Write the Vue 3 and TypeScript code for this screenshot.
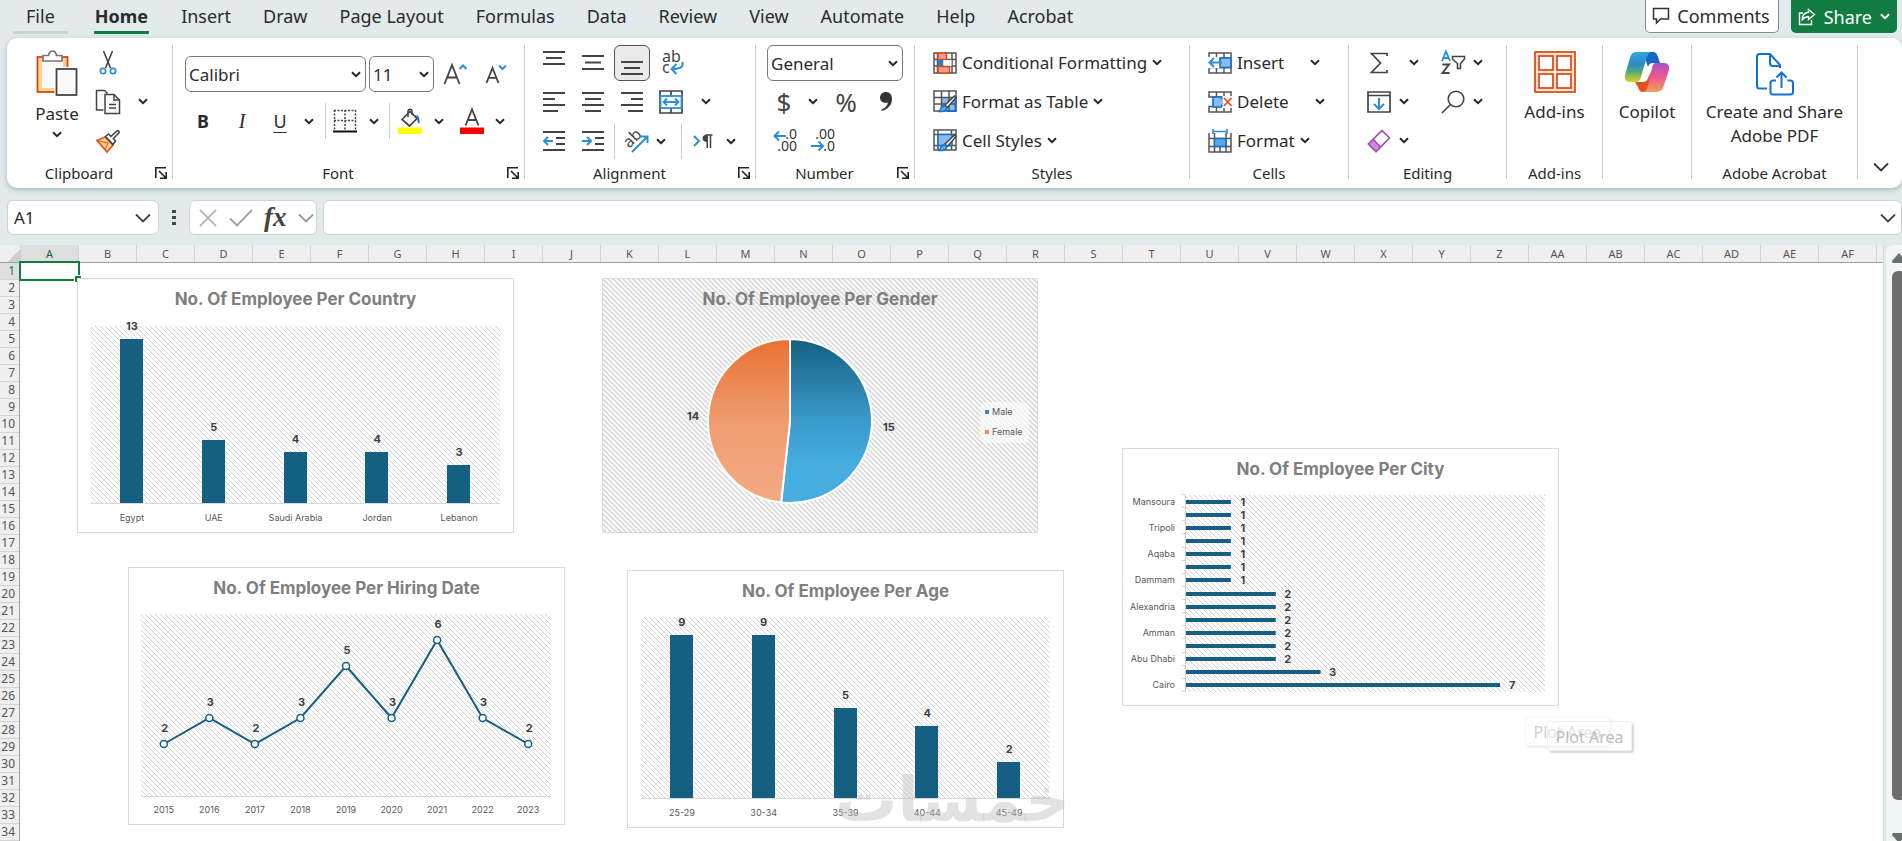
<script setup lang="ts">
import { h, ref } from 'vue'

const Chevron = (props: { tone?: string; big?: boolean }) =>
  h('svg', { width: props.big ? 16 : 10, height: props.big ? 10 : 7, viewBox: props.big ? '0 0 16 10' : '0 0 10 7', fill: 'none', 'aria-hidden': 'true' }, [
    h('path', {
      d: props.big ? 'M1 1.5l7 7 7-7' : 'M1 1.2l4 4 4-4',
      stroke: props.tone ?? '#262626',
      'stroke-width': props.big ? 1.8 : 2,
    }),
  ])
Chevron.props = { tone: String, big: Boolean }

const Launcher = () =>
  h('svg', { width: 12, height: 12, viewBox: '0 0 12 12', fill: 'none', stroke: '#222', 'stroke-width': 1.6 }, [
    h('path', { d: 'M.8 11V.8H11' }),
    h('path', { d: 'M4 4l7 7M11.2 5v6.2H5' }),
  ])

const tabs = ['File', 'Home', 'Insert', 'Draw', 'Page Layout', 'Formulas', 'Data', 'Review', 'View', 'Automate', 'Help', 'Acrobat']
const activeTab = ref('Home')
const cellName = ref('A1')
const formula = ref('')

const columns = Array.from({ length: 32 }, (_, i) =>
  i < 26 ? String.fromCharCode(65 + i) : 'A' + String.fromCharCode(65 + i - 26))
const rows = Array.from({ length: 34 }, (_, i) => i + 1)

interface Point { label: string; value: number }
interface Plot { x: number; y: number; w: number; h: number; max: number }

const countryPlot: Plot = { x: 14, y: 48, w: 409, h: 177, max: 14 }
const countries: Point[] = [
  { label: 'Egypt', value: 13 },
  { label: 'UAE', value: 5 },
  { label: 'Saudi Arabia', value: 4 },
  { label: 'Jordan', value: 4 },
  { label: 'Lebanon', value: 3 },
]
const agePlot: Plot = { x: 14, y: 47, w: 409, h: 181, max: 10 }
const ages: Point[] = [
  { label: '25-29', value: 9 },
  { label: '30-34', value: 9 },
  { label: '35-39', value: 5 },
  { label: '40-44', value: 4 },
  { label: '45-49', value: 2 },
]
const columnCharts = [
  { id: 'country', title: 'No. Of Employee Per Country', plot: countryPlot, data: countries, height: 211 },
  { id: 'age', title: 'No. Of Employee Per Age', plot: agePlot, data: ages, height: 214 },
]
const colX = (p: Plot, n: number, i: number) => p.x + (p.w / n) * (i + 0.5)
const valY = (p: Plot, v: number) => p.y + p.h - (p.h / p.max) * v

const hiringPlot: Plot = { x: 13, y: 47, w: 410, h: 182, max: 7 }
const hiring: Point[] = [2, 3, 2, 3, 5, 3, 6, 3, 2].map((value, i) => ({ label: String(2015 + i), value }))
const hiringLine = hiring.map((d, i) => `${colX(hiringPlot, 9, i)},${valY(hiringPlot, d.value)}`).join(' ')

const cityPlot: Plot = { x: 64, y: 47, w: 359, h: 197, max: 8 }
const cities: Point[] = [
  { label: 'Mansoura', value: 1 }, { label: '', value: 1 },
  { label: 'Tripoli', value: 1 }, { label: '', value: 1 },
  { label: 'Aqaba', value: 1 }, { label: '', value: 1 },
  { label: 'Dammam', value: 1 }, { label: '', value: 2 },
  { label: 'Alexandria', value: 2 }, { label: '', value: 2 },
  { label: 'Amman', value: 2 }, { label: '', value: 2 },
  { label: 'Abu Dhabi', value: 2 }, { label: '', value: 3 },
  { label: 'Cairo', value: 7 },
]
const cityY = (i: number) => cityPlot.y + (cityPlot.h / 15) * (i + 0.5)
const cityW = (v: number) => (cityPlot.w / cityPlot.max) * v

const pie = { cx: 188, cy: 143, r: 82 }
const splitAngle = (15 / 29) * Math.PI * 2
const splitX = pie.cx + pie.r * Math.sin(splitAngle)
const splitY = pie.cy - pie.r * Math.cos(splitAngle)
const malePath = `M${pie.cx} ${pie.cy}V${pie.cy - pie.r}A${pie.r} ${pie.r} 0 1 1 ${splitX} ${splitY}Z`
const femalePath = `M${pie.cx} ${pie.cy}L${splitX} ${splitY}A${pie.r} ${pie.r} 0 0 1 ${pie.cx} ${pie.cy - pie.r}Z`
</script>

<template>
  <div class="excel">
    <header class="topbar">
      <nav class="tabs" aria-label="Ribbon tabs">
        <button v-for="t in tabs" :key="t" class="tab" :class="{ active: t === activeTab, file: t === 'File' }" @click="activeTab = t">{{ t }}</button>
      </nav>
      <div class="actions">
        <button class="comments">
          <svg width="18" height="18" viewBox="0 0 18 18" fill="none" stroke="#333" stroke-width="1.5"><path d="M1.5 1.5h15v10.5H8.5L4.5 16v-4h-3z" /></svg>
          Comments
        </button>
        <button class="share">
          <svg width="18" height="18" viewBox="0 0 18 18" fill="none" stroke="#fff" stroke-width="1.4"><path d="M5 5H1.5v11.5h12V12" /><path d="M10.5 1.5l6 5-6 5V8.800C7.500 8.800 5.500 10 4.200 12.500 4.200 8 6.500 4.600 10.500 4.300z" /></svg>
          Share
          <Chevron tone="#fff" />
        </button>
      </div>
    </header>

    <section class="ribbon" aria-label="Home ribbon">
      <div class="group clip">
        <div class="body">
          <button class="paste">
            <svg width="42" height="46" viewBox="0 0 42 46" fill="none">
              <rect x="1.500" y="7" width="30" height="35" fill="#f8d597" stroke="#d9480f" stroke-width="1.800" />
              <rect x="6" y="11" width="21" height="27" fill="#fafafa" />
              <path d="M7 11V5.500h5.500C13 2.500 14.500 1 16.500 1s3.500 1.500 4 4.500H26V11z" fill="#fff" stroke="#777" stroke-width="1.700" />
              <rect x="18.500" y="17" width="23" height="28" fill="#fff" />
              <rect x="20.500" y="19" width="20" height="26" fill="#fafafa" stroke="#444" stroke-width="1.800" />
            </svg>
            <span>Paste</span>
            <Chevron />
          </button>
          <div class="rows">
            <div class="row">
              <button aria-label="Cut"><svg width="18" height="26" viewBox="0 0 18 26" fill="none"><path d="M4.500 1l7 17M13.500 1l-7 17" stroke="#444" stroke-width="1.600" /><circle cx="4" cy="21" r="2.700" stroke="#2b8fd3" stroke-width="1.700" /><circle cx="14" cy="21" r="2.700" stroke="#2b8fd3" stroke-width="1.700" /></svg></button>
            </div>
            <div class="row">
              <button aria-label="Copy"><svg width="26" height="26" viewBox="0 0 26 26" fill="#fafafa" stroke="#444" stroke-width="1.500"><path d="M8.500 21H1.500V1.500h8l3 3" /><path d="M10 5.500h9l5.500 5.500v13.500H10z" /><path d="M19 5.500V11h5.500M14 15.500h7M14 19h7" fill="none" /></svg></button>
              <button aria-label="Copy options"><Chevron /></button>
            </div>
            <div class="row">
              <button aria-label="Format Painter"><svg width="26" height="24" viewBox="0 0 26 24" fill="none"><path d="M2 11.500l8-3.500 8 8-6 7z" fill="#f8d08e" stroke="#e2521b" stroke-width="1.700" /><path d="M4 12l9 2-3 7" stroke="#e2521b" /><path d="M10.500 7.500l3-2.500 2.500 2.500L22 1.800c1-.8 2.700.8 2 2L18.500 9.500l2 2.500-2.500 3.500z" fill="#fff" stroke="#444" stroke-width="1.600" /></svg></button>
            </div>
          </div>
        </div>
        <footer><span>Clipboard</span><button aria-label="Clipboard settings"><Launcher /></button></footer>
      </div>

      <div class="group font">
        <div class="body">
          <div class="row f1">
            <label class="combo"><select aria-label="Font"><option>Calibri</option></select><Chevron /></label>
            <label class="combo"><select aria-label="Font size"><option>11</option></select><Chevron /></label>
            <button aria-label="Increase font size"><svg width="24" height="22" viewBox="0 0 24 22" fill="none"><path d="M1.500 21L9 2l7.500 19M4 14.500h10" stroke="#444" stroke-width="1.800" /><path d="M16.500 6l3.500-3.500L23.500 6" stroke="#2b8fd3" stroke-width="2" /></svg></button>
            <button aria-label="Decrease font size"><svg width="22" height="20" viewBox="0 0 22 20" fill="none"><path d="M1.500 19L7.500 4l6 15M3.500 13.800h8" stroke="#444" stroke-width="1.800" /><path d="M14 1.500L17.500 5 21 1.500" stroke="#2b8fd3" stroke-width="2" /></svg></button>
          </div>
          <div class="row f2">
            <button class="bold" aria-label="Bold">B</button>
            <button class="italic" aria-label="Italic">I</button>
            <button class="under" aria-label="Underline">U</button>
            <button aria-label="Underline options"><Chevron /></button>
            <i class="sep"></i>
            <button aria-label="Borders"><svg width="24" height="24" viewBox="0 0 24 24" fill="none" stroke="#444" stroke-width="1.500"><path d="M1 1.500h22M1 11.500h22M1.500 1v20M12 1v20M22.500 1v20" stroke-dasharray="2 1.500" /><path d="M0 22.500h24" stroke="#111" stroke-width="2" /></svg></button>
            <button aria-label="Border options"><Chevron /></button>
            <i class="sep"></i>
            <button aria-label="Fill colour"><svg width="24" height="26" viewBox="0 0 24 26" fill="none"><path d="M4 11.500L12 3.500l7 7-7.500 7.500z" stroke="#444" stroke-width="1.700" fill="#fafafa" /><path d="M10 9V3.500c0-3 4-3 4 0V7" stroke="#444" stroke-width="1.500" /><path d="M17 7c4 0 5 3 4.500 9-2-1-2.500-4-2-6z" fill="#1f74c7" /><rect y="19.500" width="24" height="6.500" fill="#ff0" /></svg></button>
            <button aria-label="Fill colour options"><Chevron /></button>
            <button aria-label="Font colour"><svg width="24" height="26" viewBox="0 0 24 26" fill="none"><path d="M5.500 17.500L12 1.500l6.500 16M7.800 12h8.400" stroke="#444" stroke-width="1.800" /><rect y="19.500" width="24" height="6.500" fill="#f00" /></svg></button>
            <button aria-label="Font colour options"><Chevron /></button>
          </div>
        </div>
        <footer><span>Font</span><button aria-label="Font settings"><Launcher /></button></footer>
      </div>

      <div class="group align">
        <div class="body rows">
          <div class="row a1">
            <button aria-label="Top align"><svg class="ln" width="22" height="24" viewBox="0 0 22 24"><path d="M0 1h22M3 7h16M0 13h22" /></svg></button>
            <button aria-label="Middle align"><svg class="ln" width="22" height="24" viewBox="0 0 22 24"><path d="M0 5h22M3 11.500h16M0 18h22" /></svg></button>
            <button class="pressed" aria-label="Bottom align"><svg class="ln" width="22" height="24" viewBox="0 0 22 24"><path d="M0 11h22M3 17h16M0 23h22" /></svg></button>
            <button aria-label="Wrap text"><svg width="24" height="26" viewBox="0 0 24 26" fill="none"><text x="1" y="12" class="ic">ab</text><text x="1" y="23" class="ic">c</text><path d="M21.500 12c1 5-2 7-10 7M15.500 14L10.500 19l5 5" stroke="#2b8fd3" stroke-width="2" /></svg></button>
          </div>
          <div class="row a2">
            <button aria-label="Align left"><svg class="ln" width="22" height="22" viewBox="0 0 22 22"><path d="M0 2h22M0 8h12M0 14h22M0 20h15" /></svg></button>
            <button aria-label="Centre"><svg class="ln" width="22" height="22" viewBox="0 0 22 22"><path d="M0 2h22M3 8h16M0 14h22M3 20h16" /></svg></button>
            <button aria-label="Align right"><svg class="ln" width="22" height="22" viewBox="0 0 22 22"><path d="M0 2h22M10 8h12M0 14h22M7 20h15" /></svg></button>
            <button aria-label="Merge and centre"><svg width="24" height="24" viewBox="0 0 24 24" fill="none"><path d="M1 1h22v22H1zM12 1v5M12 18v5" stroke="#444" stroke-width="1.700" /><rect x="1.500" y="6" width="21" height="12" fill="#fff" stroke="#2b8fd3" stroke-width="1.800" /><path d="M4 12h16M8 8.500L4.500 12 8 15.500M16 8.500l3.500 3.500-3.500 3.500" stroke="#2b8fd3" stroke-width="1.800" /></svg></button>
            <button aria-label="Merge options"><Chevron /></button>
          </div>
          <div class="row a3">
            <button aria-label="Decrease indent"><svg class="ln" width="22" height="22" viewBox="0 0 22 22"><path d="M0 2h22M13 8h9M13 14h9M0 20h22" /><path class="blue" d="M1 11h9M5 7l-4 4 4 4" /></svg></button>
            <button aria-label="Increase indent"><svg class="ln" width="22" height="22" viewBox="0 0 22 22"><path d="M0 2h22M13 8h9M13 14h9M0 20h22" /><path class="blue" d="M0 11h9M5 7l4 4-4 4" /></svg></button>
            <i class="sep"></i>
            <button aria-label="Orientation"><svg width="26" height="26" viewBox="0 0 26 26" fill="none"><text text-anchor="middle" class="ic" transform="translate(13 14) rotate(-45)">ab</text><path d="M9 24L24 9M17.500 8.500H24.500V15" stroke="#2b8fd3" stroke-width="2" /></svg></button>
            <button aria-label="Orientation options"><Chevron /></button>
            <i class="sep"></i>
            <button aria-label="Text direction"><svg width="20" height="16" viewBox="0 0 20 16" fill="none"><path d="M1 3l5 5-5 5" stroke="#2b8fd3" stroke-width="2" /><path d="M19.500 2H13M14.200 2v13M17.500 2v13" stroke="#444" stroke-width="1.500" /><path d="M14 1.500v7.500c-6 0-6-7.500 0-7.500z" fill="#444" /></svg></button>
            <button aria-label="Text direction options"><Chevron /></button>
          </div>
        </div>
        <footer><span>Alignment</span><button aria-label="Alignment settings"><Launcher /></button></footer>
      </div>

      <div class="group number">
        <div class="body rows">
          <div class="row"><label class="combo"><select aria-label="Number format"><option>General</option></select><Chevron /></label></div>
          <div class="row n2">
            <button class="sym" aria-label="Currency">$</button>
            <button aria-label="Currency options"><Chevron /></button>
            <button class="sym" aria-label="Percent">%</button>
            <button aria-label="Comma style"><svg width="12" height="19" viewBox="0 0 12 19"><path d="M6 0c4 0 6 3 6 7 0 6-4 10-10.500 12v-1.500C5.500 16 7.500 13.500 7.800 10.500 4 11.800 0 9.500 0 5.800 0 2.500 2.500 0 6 0z" fill="#333" /></svg></button>
          </div>
          <div class="row n3">
            <button aria-label="Increase decimal"><svg width="24" height="24" viewBox="0 0 24 24" fill="none"><text x="24" y="10" class="dec">.0</text><text x="24" y="22" class="dec">.00</text><path d="M1 7h12M6 2.500L1.500 7 6 11.500" stroke="#2b8fd3" stroke-width="2" /></svg></button>
            <button aria-label="Decrease decimal"><svg width="24" height="24" viewBox="0 0 24 24" fill="none"><text x="24" y="10" class="dec">.00</text><text x="24" y="22" class="dec">.0</text><path d="M0 17h12M7.500 12.500L12 17l-4.500 4.500" stroke="#2b8fd3" stroke-width="2" /></svg></button>
          </div>
        </div>
        <footer><span>Number</span><button aria-label="Number settings"><Launcher /></button></footer>
      </div>

      <div class="group styles">
        <div class="body rows">
          <div class="row"><button class="wide"><svg width="24" height="22" viewBox="0 0 24 22" fill="none"><path d="M1 1h22v20H1zM1 7.500h22M1 14h22M4.500 1v20M19 1v20M12 1v20" stroke="#555" stroke-width="1.500" /><rect x="5" y="1" width="8.500" height="6.500" fill="#ff9a94" stroke="#d9480f" stroke-width="1.500" /><rect x="5" y="8" width="5.500" height="6" fill="#2b7fd0" /><rect x="10.500" y="8" width="8" height="6" fill="#fff" /><rect x="5" y="14.500" width="11.500" height="6.500" fill="#ff9a94" stroke="#d9480f" stroke-width="1.500" /></svg>Conditional Formatting<Chevron /></button></div>
          <div class="row"><button class="wide"><svg width="24" height="23" viewBox="0 0 24 23" fill="none"><rect x="8" y="7" width="15" height="14" fill="#86bdee" /><path d="M1 1h22v20H1zM1 7.500h22M1 14h22M8.500 1v20M16 1v20" stroke="#555" stroke-width="1.500" /><path d="M22.500 6v15H14" stroke="#1a6fc4" stroke-width="2" /><path d="M12 15l9.500-9 1.500 1.500-8.500 10z" fill="#fff" stroke="#444" stroke-width="1.500" /><path d="M5 21.500c3 0 2-6 6.500-6 3.500 1.500 3.500 7-6.500 6z" fill="#5aa7e8" stroke="#1a6fc4" stroke-width="1.400" /></svg>Format as Table<Chevron /></button></div>
          <div class="row"><button class="wide"><svg width="24" height="23" viewBox="0 0 24 23" fill="none"><path d="M1 1h22v20H1zM1 5.500h22M5 1v20M1 16.500h22M18.500 1v20" stroke="#555" stroke-width="1.500" /><rect x="5" y="5.500" width="14" height="11" fill="#86bdee" stroke="#1a6fc4" stroke-width="1.500" /><path d="M12 15l9.500-9 1.500 1.500-8.500 10z" fill="#fff" stroke="#444" stroke-width="1.500" /><path d="M5 21.500c3 0 2-6 6.500-6 3.500 1.500 3.500 7-6.500 6z" fill="#5aa7e8" stroke="#1a6fc4" stroke-width="1.400" /></svg>Cell Styles<Chevron /></button></div>
        </div>
        <footer><span>Styles</span></footer>
      </div>

      <div class="group cells">
        <div class="body rows">
          <div class="row">
            <button class="wide"><svg width="24" height="22" viewBox="0 0 24 22" fill="none"><path d="M1 1h22v20H1zM1 6h22M1 15.500h22M8.500 1v20M16 1v20" stroke="#555" stroke-width="1.500" /><rect x="0" y="5" width="12" height="11" fill="#fff" /><rect x="12" y="6" width="11" height="9.500" fill="#86bdee" stroke="#1a6fc4" stroke-width="1.600" /><path d="M1 10.500h13M6 6l-4.500 4.500L6 15" stroke="#2b8fd3" stroke-width="2" /></svg>Insert</button>
            <button class="split" aria-label="Insert options"><Chevron /></button>
          </div>
          <div class="row">
            <button class="wide"><svg width="24" height="22" viewBox="0 0 24 22" fill="none"><path d="M1 1h22v5H1zM1 15.500h22V21H1zM8.500 1v5M16 1v5M8.500 15.500V21M16 15.500V21" stroke="#555" stroke-width="1.500" /><path d="M5 6h8l3 5-3 5H5z" fill="#86bdee" stroke="#1a6fc4" stroke-width="1.600" /><rect x="14.500" y="5" width="10" height="12" fill="#fff" /><path d="M16 7l7.500 8M23.500 7L16 15" stroke="#e2521b" stroke-width="1.800" /></svg>Delete</button>
            <button class="split" aria-label="Delete options"><Chevron /></button>
          </div>
          <div class="row"><button class="wide"><svg width="24" height="24" viewBox="0 0 24 24" fill="none"><path d="M1 4v19h22V4M1 9.500h22M1 17.500h22M6.500 4v19M18 4v19M12 17v6" stroke="#555" stroke-width="1.500" /><rect x="6.500" y="9.500" width="11.500" height="8" fill="#5aa7e8" stroke="#1a6fc4" stroke-width="1.500" /><path d="M5 2.500h14M5 0v5M19 0v5" stroke="#2b8fd3" stroke-width="1.600" /></svg>Format<Chevron /></button></div>
        </div>
        <footer><span>Cells</span></footer>
      </div>

      <div class="group editing">
        <div class="body rows">
          <div class="row e1">
            <button aria-label="AutoSum"><svg width="18" height="22" viewBox="0 0 18 22" fill="none"><path d="M17 4V1.500H1.500L10.500 11l-9 9.500H17V18" stroke="#444" stroke-width="1.700" /></svg></button>
            <button aria-label="AutoSum options"><Chevron /></button>
            <i></i>
            <button aria-label="Sort and filter"><svg width="24" height="25" viewBox="0 0 24 25" fill="none"><path d="M1 11L5 1.500 9 11M2.500 8h5" stroke="#2b8fd3" stroke-width="1.900" /><path d="M1.500 14.500H8L1.500 23H8.500" stroke="#444" stroke-width="1.900" /><path d="M11.500 6.500h12v2.500l-4 4.500v5h-3v-5l-5-4.500z" stroke="#444" stroke-width="1.600" /></svg></button>
            <button aria-label="Sort options"><Chevron /></button>
          </div>
          <div class="row e2">
            <button aria-label="Fill"><svg width="24" height="22" viewBox="0 0 24 22" fill="none"><path d="M1 1h22v20H1zM1 4.500h22" stroke="#444" stroke-width="1.700" /><path d="M12 7v11M7 13l5 5 5-5" stroke="#2b8fd3" stroke-width="2" /></svg></button>
            <button aria-label="Fill options"><Chevron /></button>
            <i></i>
            <button aria-label="Find and select"><svg width="24" height="24" viewBox="0 0 24 24" fill="none" stroke="#444" stroke-width="1.600"><circle cx="15" cy="9" r="7.800" /><path d="M9.500 14.500L1 23" /></svg></button>
            <button aria-label="Find options"><Chevron /></button>
          </div>
          <div class="row e2">
            <button aria-label="Clear"><svg width="24" height="24" viewBox="0 0 24 24" fill="none"><path d="M15 1.500l7.500 7.500L9 22.500 1.500 15z" fill="#fff" stroke="#a84bb8" stroke-width="1.700" /><path d="M6.500 10.500l7 7.500L9 22.500 1.500 15z" fill="#d08be0" stroke="#a84bb8" stroke-width="1.500" /></svg></button>
            <button aria-label="Clear options"><Chevron /></button>
          </div>
        </div>
        <footer><span>Editing</span></footer>
      </div>

      <div class="group addins">
        <button class="tall">
          <svg width="42" height="42" viewBox="0 0 42 42" fill="#fff" stroke="#d9480f" stroke-width="1.700"><rect x="1" y="1" width="40" height="40" fill="#fbe3d6" /><rect x="5" y="5" width="14" height="14" /><rect x="23" y="5" width="14" height="14" /><rect x="5" y="23" width="14" height="14" /><rect x="23" y="23" width="14" height="14" /></svg>
          <span>Add-ins</span>
        </button>
        <footer><span>Add-ins</span></footer>
      </div>

      <div class="group copilot">
        <button class="tall">
          <svg width="44" height="42" viewBox="0 0 44 42">
            <defs>
              <linearGradient id="cpA" x1="0" y1="0" x2="0" y2="1"><stop offset="0" stop-color="#2fa9dc" /><stop offset=".4" stop-color="#2b88c9" /><stop offset=".65" stop-color="#51a878" /><stop offset="1" stop-color="#e2cf1c" /></linearGradient>
              <linearGradient id="cpB" x1="0" y1="0" x2="0" y2="1"><stop offset="0" stop-color="#b04fc4" /><stop offset=".5" stop-color="#ec5a8d" /><stop offset="1" stop-color="#f2a05a" /></linearGradient>
            </defs>
            <path d="M21 1h7c3 0 4 2 5 5l2 6h-7c-3 0-4 1-5 4l-3-9c-1-4 0-6 1-6z" fill="#1467c6" />
            <path d="M12 1h14c-3 1-4 4-5 8l-5 17c-1 4-3 5-6 5H5c-4 0-6-3-5-7L5 7c1-4 3-6 7-6z" fill="url(#cpA)" />
            <path d="M10 31h7c3 0 5-1 6-4l4-8-3 16c-1 4-3 6-6 6-3 0-4-2-5-5z" fill="#e2521b" />
            <path d="M31 12h8c4 0 6 3 5 7l-5 15c-1 5-4 7-8 7H17c4 0 5-3 6-7l4-17c1-4 2-5 4-5z" fill="url(#cpB)" />
          </svg>
          <span>Copilot</span>
        </button>
      </div>

      <div class="group acrobat">
        <button class="tall pdf">
          <svg width="38" height="42" viewBox="0 0 38 42" fill="none" stroke="#1473d0" stroke-width="2"><path d="M11 35.500H3.500c-1.500 0-2.500-1-2.500-2.500V3.500C1 2 2 1 3.500 1H14l10 11v3M14 1v8.500c0 2 1 3.500 3 3.500h7" /><path d="M20 27.500h-3c-1.500 0-2.500 1-2.500 2.500v9c0 1.500 1 2.500 2.500 2.500h17.500c1.500 0 2.500-1 2.500-2.500v-9c0-1.500-1-2.500-2.500-2.500h-3" /><path d="M25.500 35V19.500M20.500 24.500l5-5 5 5" /></svg>
          <span>Create and Share<br />Adobe PDF</span>
        </button>
        <footer><span>Adobe Acrobat</span></footer>
      </div>

      <div class="tail"><button aria-label="Collapse ribbon"><Chevron big tone="#333" /></button></div>
    </section>

    <section class="formula-bar">
      <label class="namebox"><input v-model="cellName" aria-label="Name box" /><Chevron big tone="#444" /></label>
      <svg class="dots" width="4" height="16" viewBox="0 0 4 16" fill="#444"><rect width="4" height="3" /><rect y="6" width="4" height="3" /><rect y="12" width="4" height="3" /></svg>
      <div class="fxbox">
        <button aria-label="Cancel"><svg width="18" height="18" viewBox="0 0 20 20" stroke="#b0b0b0" stroke-width="1.800"><path d="M1 1l18 18M19 1L1 19" /></svg></button>
        <button aria-label="Enter"><svg width="24" height="18" viewBox="0 0 24 18" fill="none" stroke="#a0a0a0" stroke-width="1.800"><path d="M1 9.500l7 7L23 1" /></svg></button>
        <button class="fx" aria-label="Insert function">fx</button>
        <button aria-label="Function options"><Chevron big tone="#999" /></button>
      </div>
      <label class="formula"><input v-model="formula" aria-label="Formula" /><Chevron big tone="#444" /></label>
    </section>

    <main class="workspace">
      <div class="sheet">
        <div class="colhead">
          <div class="corner"></div>
          <div v-for="c in columns" :key="c" class="col" :class="{ sel: c === 'A' }">{{ c }}</div>
        </div>
        <div class="grid">
          <div class="rowhead">
            <div v-for="r in rows" :key="r" class="rnum" :class="{ sel: r === 1 }">{{ r }}</div>
          </div>
          <div class="canvas">
            <div class="cursor"></div>

            <article v-for="c in columnCharts" :key="c.id" class="card" :class="c.id">
              <h2>{{ c.title }}</h2>
              <svg width="435" :height="c.height" :viewBox="`1 43 435 ${c.height}`">
                <defs>
                  <pattern :id="'hatch-' + c.id" width="5" height="5" patternUnits="userSpaceOnUse"><path d="M-1 -1L6 6M-1 4L1 6M4 -1L6 1" stroke="#d4d4d4" stroke-width="1" /></pattern>
                </defs>
                <rect :x="c.plot.x" :y="c.plot.y" :width="c.plot.w" :height="c.plot.h" :fill="`url(#hatch-${c.id})`" />
                <path :d="`M${c.plot.x} ${c.plot.y + c.plot.h + 0.5}h${c.plot.w}`" stroke="#d9d9d9" />
                <g v-for="(d, i) in c.data" :key="d.label">
                  <rect :x="Math.round(colX(c.plot, 5, i) - 12)" :y="Math.round(valY(c.plot, d.value))" width="23" :height="c.plot.y + c.plot.h - Math.round(valY(c.plot, d.value))" fill="#156082" />
                  <text class="val" :x="colX(c.plot, 5, i)" :y="valY(c.plot, d.value) - 9">{{ d.value }}</text>
                  <text class="cat" :x="colX(c.plot, 5, i)" :y="c.plot.y + c.plot.h + 18">{{ d.label }}</text>
                </g>
              </svg>
            </article>

            <article class="card gender">
              <svg class="backdrop" width="100%" height="100%">
                <defs><pattern id="hatch-dark" width="5" height="5" patternUnits="userSpaceOnUse"><path d="M-1 -1L6 6M-1 4L1 6M4 -1L6 1" stroke="#dedede" stroke-width="2" /></pattern></defs>
                <rect width="100%" height="100%" fill="url(#hatch-dark)" />
              </svg>
              <h2>No. Of Employee Per Gender</h2>
              <svg width="434" height="211" viewBox="1 43 434 211">
                <defs>
                  <linearGradient id="male" x1="0" y1="0" x2="0" y2="1"><stop offset="0" stop-color="#156082" /><stop offset=".5" stop-color="#3a9bca" /><stop offset=".75" stop-color="#45addf" /><stop offset="1" stop-color="#45addf" /></linearGradient>
                  <linearGradient id="female" x1="0" y1="0" x2="0" y2="1"><stop offset="0" stop-color="#e97132" /><stop offset=".5" stop-color="#ef9c70" /><stop offset="1" stop-color="#f4ab85" /></linearGradient>
                </defs>
                <path :d="malePath" fill="url(#male)" stroke="#fff" stroke-width="2" />
                <path :d="femalePath" fill="url(#female)" stroke="#fff" stroke-width="2" />
                <text class="val" x="91" y="142">14</text>
                <text class="val" x="287" y="153">15</text>
                <rect x="378" y="124" width="49" height="41" rx="6" fill="#fff" fill-opacity=".6" />
                <rect x="383" y="132" width="4" height="4" fill="#2b8cbd" /><text class="leg" x="390" y="137">Male</text>
                <rect x="383" y="152" width="4" height="4" fill="#ee8d5a" /><text class="leg" x="390" y="157">Female</text>
              </svg>
            </article>

            <article class="card hiring">
              <h2>No. Of Employee Per Hiring Date</h2>
              <svg width="435" height="214" viewBox="1 43 435 214">
                <rect :x="hiringPlot.x" :y="hiringPlot.y" :width="hiringPlot.w" :height="hiringPlot.h" fill="url(#hatch-country)" />
                <path :d="`M${hiringPlot.x} ${hiringPlot.y + hiringPlot.h + 0.5}h${hiringPlot.w}`" stroke="#d9d9d9" />
                <polyline :points="hiringLine" fill="none" stroke="#156082" stroke-width="2" />
                <g v-for="(d, i) in hiring" :key="d.label">
                  <circle :cx="colX(hiringPlot, 9, i)" :cy="valY(hiringPlot, d.value)" r="3.500" fill="#fff" stroke="#156082" stroke-width="1.500" />
                  <text class="val" :x="colX(hiringPlot, 9, i) + 1" :y="valY(hiringPlot, d.value) - 12">{{ d.value }}</text>
                  <text class="cat" :x="colX(hiringPlot, 9, i)" :y="hiringPlot.y + hiringPlot.h + 17">{{ d.label }}</text>
                </g>
              </svg>
            </article>

            <article class="card city">
              <h2>No. Of Employee Per City</h2>
              <svg width="435" height="214" viewBox="1 43 435 214">
                <rect :x="cityPlot.x" :y="cityPlot.y" :width="cityPlot.w" :height="cityPlot.h" fill="url(#hatch-country)" />
                <path d="M63.500 47v197" stroke="#d0d0d0" />
                <path v-for="n in 16" :key="n" :d="`M60 ${Math.round(46 + (n - 1) * 13.13) + 0.5}h4`" stroke="#d0d0d0" />
                <g v-for="(d, i) in cities" :key="i">
                  <rect :x="cityPlot.x" :y="Math.round(cityY(i)) - 2" :width="cityW(d.value)" height="4" fill="#156082" />
                  <text class="val" :x="cityPlot.x + cityW(d.value) + 12" :y="cityY(i) + 4">{{ d.value }}</text>
                  <text class="cat end" x="53" :y="cityY(i) + 3">{{ d.label }}</text>
                </g>
              </svg>
            </article>

            <div class="tip ghost">Plot Area</div>
            <div class="tip">Plot Area</div>
            <div class="watermark" lang="ar" dir="rtl">خمسات</div>
          </div>
        </div>
      </div>
      <aside class="scroll">
        <svg class="arrow" width="14" height="10" viewBox="0 0 14 10"><path d="M7 0l7 8c0 1-.5 2-2 2H2c-2 0-2-1-2-2z" fill="#6d6d6d" /></svg>
        <div class="thumb"></div>
        <svg class="arrow" width="14" height="10" viewBox="0 0 14 10"><path d="M7 10l7-8c0-1-.5-2-2-2H2C0 0 0 1 0 2z" fill="#6d6d6d" /></svg>
      </aside>
    </main>
  </div>
</template>

<style>
body { margin: 0; overflow: hidden; }
</style>

<style scoped>
* { box-sizing: border-box; }
.excel {
  height: 100vh; display: flex; flex-direction: column; overflow: hidden;
  background: #e2eaeb; color: #2b2b2b; font-family: "Noto Sans", "Open Sans", sans-serif; font-size: 17px;
}
button { border: 0; padding: 0; margin: 0; background: none; color: inherit; font: inherit; display: flex; align-items: center; justify-content: center; white-space: nowrap; }
svg { display: block; flex: none; overflow: visible; }
select, input { font: inherit; color: inherit; border: 0; outline: 0; background: none; appearance: none; padding: 0; min-width: 0; }

.topbar { display: flex; justify-content: space-between; height: 38px; flex: none; padding: 0 5px 0 26px; }
.tabs { display: flex; gap: 32px; font-size: 18px; }
.tab { height: 34px; border-bottom: 3px solid transparent; }
.tab.file { margin: 0 -6px 0 -13px; padding: 0 13px; border-color: #cdd2d3; }
.tab.active { padding: 0 1px; font-weight: 700; border-color: #107c41; border-radius: 1px; }
.actions { display: flex; gap: 12px; height: 33px; font-size: 18px; }
.comments { gap: 7px; padding: 0 8px 0 6px; background: #fff; border: 1px solid #8a8a8a; border-top: 0; border-radius: 0 0 5px 5px; }
.share { gap: 8px; padding: 0 7px; background: #107c41; color: #fff; border-radius: 0 0 5px 5px; }

.ribbon { display: flex; flex: none; height: 150px; margin-left: 7px; padding: 7px 0 9px; background: #fff; border-radius: 10px; box-shadow: 0 2px 5px rgba(70, 95, 100, .35); }
.group { flex: none; display: flex; flex-direction: column; justify-content: space-between; border-right: 1px solid #cfcfcf; }
.group footer { margin-top: auto; height: 12px; display: flex; align-items: center; font-size: 15px; line-height: 12px; }
.group footer span { flex: 1; text-align: center; white-space: nowrap; }
.group footer button { margin: 0 5px 0 4px; }
.row { display: grid; grid-auto-flow: column; justify-content: start; align-items: center; justify-items: center; height: 35px; }
.rows { display: grid; gap: 4px; align-content: start; }
.sep { width: 1px; height: 36px; background: #cfcfcf; }
.combo { position: relative; display: flex; align-items: center; width: 100%; height: 36px; border: 1px solid #7a7a7a; border-radius: 6px; background: #fff; padding: 0 4px 0 3px; }
.combo select { flex: 1; height: 100%; }

.clip { width: 166px; }
.clip .body { display: grid; grid-template-columns: 70px 70px; padding-left: 15px; }
.clip .row { grid-template-columns: 32px 38px; }
.paste { flex-direction: column; justify-content: start; gap: 6px; padding-top: 5px; height: 113px; }
.paste span { line-height: 23px; }
.font { width: 352px; }
.font .body { padding: 11px 0 0 12px; display: grid; gap: 11px; }
.font .row { height: 36px; }
.f1 { grid-template-columns: 181px 65px 36px 40px; column-gap: 3px; }
.f2 { grid-template-columns: 36px 42px 34px 24px 8px 32px 26px 4px 38px 20px 46px 10px; }
.bold { font-weight: 700; font-size: 18px; }
.italic { font: italic 20px "Liberation Serif", serif; }
.under { font-size: 18px; text-decoration: underline; text-underline-offset: 4px; }
.align { width: 231px; }
.align .body { padding-left: 9px; }
.a1 { grid-template-columns: 39px 39px 39px 43px; }
.a2 { grid-template-columns: 39px 39px 39px 39px 32px; }
.a3 { grid-template-columns: 39px 39px 4px 40px 10px 30px 14px 42px; }
.pressed { width: 36px; height: 36px; border: 1px solid #555; border-radius: 6px; background: #ebebeb; }
.ln { fill: none; stroke: #444; stroke-width: 2; }
.ln .blue { stroke: #2b8fd3; }
.ic { font-size: 16px; fill: #444; }
.number { width: 159px; }
.number .body { padding: 0 11px; }
.number .row:first-child { grid-template-columns: 136px; }
.n2 { grid-template-columns: 34px 24px 42px 38px; }
.n3 { grid-template-columns: 36px 40px; }
.sym { font-size: 26px; line-height: 30px; color: #444; }
.dec { font-size: 14px; fill: #333; text-anchor: end; }
.styles { width: 275px; }
.styles .body, .cells .body, .editing .body { padding-left: 18px; }
.wide { gap: 5px; }
.split { margin-left: 26px; }
.cells { width: 159px; }
.editing { width: 158px; }
.e1 { grid-template-columns: 24px 46px 0 32px 18px; }
.e2 { grid-template-columns: 24px 26px 20px 32px 18px; }
.addins { width: 96px; }
.copilot { width: 89px; }
.acrobat { width: 166px; }
.tall { flex-direction: column; gap: 7px; padding-top: 6px; line-height: 24px; justify-content: start; }
.pdf { padding-top: 8px; gap: 5px; }
.tail { flex: 1; display: flex; align-items: flex-end; justify-content: center; padding: 0 0 7px 2px; }

.formula-bar { display: flex; flex: none; align-items: center; height: 35px; margin: 12px 0 10px 7px; }
.namebox, .fxbox, .formula { height: 35px; display: flex; align-items: center; background: #fff; border: 1px solid #cdd2d3; border-radius: 6px; }
.namebox { width: 152px; padding: 0 7px 0 6px; }
.namebox input, .formula input { flex: 1; height: 100%; }
.dots { margin: 0 13px; }
.fxbox { width: 128px; padding: 0 2px 0 9px; justify-content: space-between; }
.fx { font: italic 700 27px "Liberation Serif", serif; color: #444; }
.formula { flex: 1; margin-left: 6px; padding: 0 5px; }

.workspace { flex: 1; min-height: 0; display: flex; }
.sheet { flex: 1; min-width: 0; overflow: hidden; background: #fff; border-right: 1px solid #d4d8d8; display: flex; flex-direction: column; }
.colhead { display: flex; flex: none; height: 18px; background: #efefef; border-bottom: 1px solid #9f9f9f; font: 11px/17px "Noto Sans", sans-serif; color: #555; }
.corner { flex: none; width: 21px; border-right: 1px solid #cfcfcf; background: linear-gradient(135deg, #efefef 65%, #d0d0d0 65%); }
.col { flex: none; width: 58px; text-align: center; border-right: 1px solid #d4d4d4; }
.col.sel { background: #dedede; color: #1c5c3c; }
.grid { flex: 1; min-height: 0; display: flex; }
.rowhead { flex: none; width: 20px; background: #efefef; border-right: 1px solid #9f9f9f; font: 12px/16px "Noto Sans", sans-serif; color: #555; }
.rnum { height: 17px; padding-right: 4px; text-align: right; border-bottom: 1px solid #d4d4d4; }
.rnum.sel { background: #dedede; color: #107c41; }
.canvas { position: relative; flex: 1; }
.cursor { position: absolute; left: -1px; top: -2px; width: 61px; height: 20px; border: 2px solid #107c41; }
.cursor::after { content: ""; position: absolute; right: -3px; bottom: -3px; width: 6px; height: 6px; background: #107c41; border: solid #fff; border-width: 1px 0 0 1px; }

.card { position: absolute; width: 437px; background: #fff; border: 1px solid #d9d9d9; }
.card h2 { position: relative; margin: 0; height: 42px; font: 700 17px/40px Inter, sans-serif; color: #7f7f7f; text-align: center; }
.country { left: 57px; top: 15px; }
.gender { left: 582px; top: 15px; width: 436px; }
.hiring { left: 108px; top: 304px; }
.age { left: 607px; top: 307px; }
.city { left: 1102px; top: 185px; }
.card > svg { position: relative; }
.card > .backdrop { position: absolute; inset: 0; }
.val { font: 700 11px Inter, sans-serif; fill: #404040; text-anchor: middle; }
.cat { font: 9px Inter, sans-serif; fill: #595959; text-anchor: middle; }
.cat.end { text-anchor: end; }
.leg { font: 9px Inter, sans-serif; fill: #595959; }

.tip { position: absolute; left: 1527px; top: 458px; width: 85px; height: 30px; line-height: 30px; text-align: center; font-size: 16px; color: #bcbcbc; background: rgba(255, 255, 255, .4); border: 1px solid #f0f0f0; border-radius: 3px; box-shadow: 2px 2px 2px #d8d8d8; white-space: nowrap; }
.tip.ghost { left: 1505px; top: 453px; color: #d0d0d0; border-color: #f6f6f6; box-shadow: 2px 2px 2px #ededed; }
.watermark { position: absolute; left: 818px; top: 497px; width: 232px; text-align: center; font: 700 62px/80px "DejaVu Sans", sans-serif; color: rgba(190, 190, 190, .45); white-space: nowrap; }

.scroll { flex: none; width: 17px; margin-left: 1px; display: flex; flex-direction: column; align-items: flex-start; padding: 8px 0 0 6px; background: #f3f6f6; border-left: 1px solid #e6ecec; border-radius: 8px 0 0 0; overflow: hidden; }
.thumb { flex: 1; width: 14px; margin: 8px 0 33px; border-radius: 6px; background: #6d6d6d; }
.scroll .arrow:last-child { margin-bottom: -2px; }
</style>
